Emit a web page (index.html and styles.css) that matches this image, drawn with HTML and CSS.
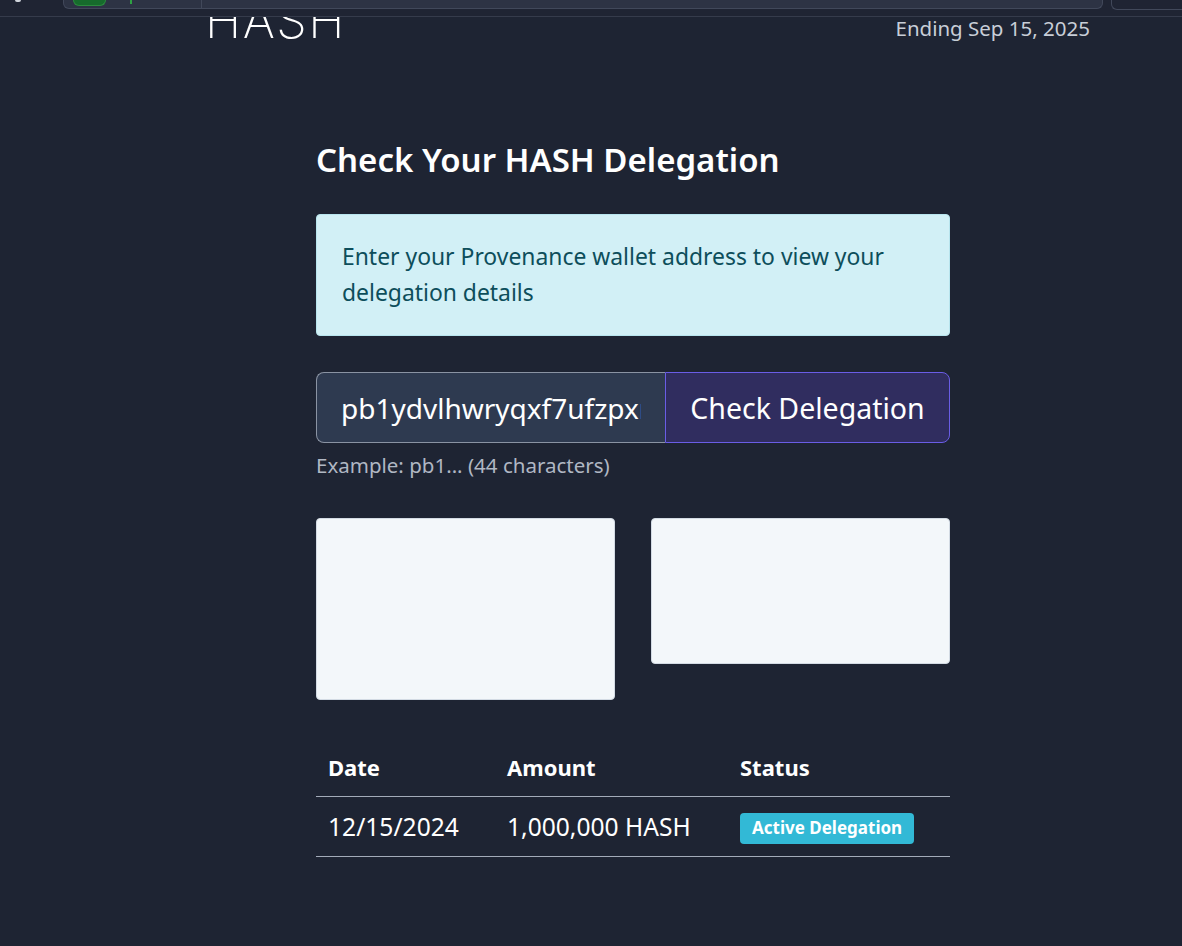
FILE: index.html
```html
<!DOCTYPE html>
<html lang="en">
<head>
<meta charset="utf-8">
<title>Check Your HASH Delegation</title>
<link rel="stylesheet" href="styles.css">
</head>
<body>
<div class="chrome">
  <div class="chrome-left"><span class="chrome-dot"></span></div>
  <div class="url-field">
    <span class="url-pill"></span>
    <span class="url-caret"></span>
    <span class="url-sep"></span>
  </div>
  <div class="chrome-right"></div>
</div>
<header class="site-header">
  <div class="logo">HASH</div>
  <div class="ending">Ending Sep 15, 2025</div>
</header>
<main class="main">
  <h1 class="title">Check Your HASH Delegation</h1>
  <div class="alert">Enter your Provenance wallet address to view your delegation details</div>
  <form class="lookup" onsubmit="return false">
    <div class="input-group">
      <input class="address" type="text" value="pb1ydvlhwryqxf7ufzpxnt8ylk4ylc3mpcm9xs3q" spellcheck="false">
      <button class="check-btn" type="submit">Check Delegation</button>
    </div>
    <div class="hint">Example: pb1... (44 characters)</div>
  </form>
  <div class="cards">
    <div class="card card-tall"></div>
    <div class="card card-short"></div>
  </div>
  <table class="history">
    <thead>
      <tr><th>Date</th><th>Amount</th><th>Status</th></tr>
    </thead>
    <tbody>
      <tr><td>12/15/2024</td><td>1,000,000 HASH</td><td><span class="badge">Active Delegation</span></td></tr>
    </tbody>
  </table>
</main>
</body>
</html>
```
FILE: styles.css
```css
* { box-sizing: border-box; }
html, body { margin: 0; padding: 0; }
body {
  background: #1e2433;
  color: #ffffff;
  font-family: "Noto Sans", "Liberation Sans", sans-serif;
  min-height: 946px;
}
.chrome {
  height: 17px;
  display: flex;
  align-items: flex-start;
  background: #1f2433;
  border-bottom: 1px solid #353b4b;
  position: relative;
  z-index: 2;
}
.chrome-left {
  width: 63px;
  display: flex;
  padding-left: 15px;
}
.chrome-dot {
  width: 6px; height: 2px;
  background: #d0d4dc;
  border-radius: 0 0 3px 3px;
}
.url-field {
  width: 1040px;
  height: 9px;
  background: #2d3344;
  border: 1px solid #41485a;
  border-top: none;
  border-radius: 0 0 6px 6px;
  display: flex;
  align-items: flex-start;
  padding-left: 9px;
}
.url-pill {
  width: 33px; height: 6px;
  background: #166b2c;
  border: 1px solid #2b8a3e;
  border-top: none;
  border-radius: 0 0 6px 6px;
}
.url-caret {
  width: 2px; height: 4px;
  background: #2ea043;
  margin-left: 24px;
}
.url-sep {
  width: 1px; height: 8px;
  background: #41485a;
  margin-left: 69px;
}
.chrome-right {
  margin-left: 8px;
  flex: 1;
  height: 10px;
  border: 1px solid #41485a;
  border-top: none;
  border-right: none;
  border-radius: 0 0 0 6px;
}
.site-header {
  height: 42px;
  overflow: hidden;
  display: flex;
  justify-content: space-between;
  align-items: flex-end;
  padding: 0 92px 0 205px;
  margin-top: -18px;
}
.logo {
  font-family: "Inter", sans-serif;
  font-weight: 200;
  font-size: 49px;
  line-height: 49px;
  letter-spacing: 1.5px;
  color: #ffffff;
  margin-bottom: -4px;
}
.ending {
  font-size: 20.5px;
  line-height: 26px;
  color: #c8ced8;
  margin-bottom: 0px;
}
.main {
  width: 634px;
  margin-left: 316px;
  padding-top: 99px;
}
.title {
  margin: 0;
  font-size: 33px;
  line-height: 40px;
  font-weight: 600;
  color: #ffffff;
}
.alert {
  margin-top: 34px;
  background: #d2f0f6;
  border: 1px solid #b8e5ee;
  border-radius: 4px;
  color: #0d4e5b;
  font-size: 22.9px;
  line-height: 36px;
  padding: 24px 25px 24px 25px;
}
.lookup { margin-top: 36px; }
.input-group {
  display: flex;
  height: 71px;
}
.address {
  width: 349px;
  height: 71px;
  background: #2e3a50;
  border: 1px solid #8a93a3;
  border-right: none;
  border-radius: 8px 0 0 8px;
  color: #ffffff;
  font-family: inherit;
  font-size: 28px;
  padding: 0 24px;
  outline: none;
  margin: 0;
}
.check-btn {
  flex: 1;
  height: 71px;
  background: #302d5f;
  border: 1px solid #6a5de6;
  border-radius: 0 8px 8px 0;
  color: #ffffff;
  font-family: inherit;
  font-size: 28.5px;
  padding: 0 20px;
  margin: 0;
}
.hint {
  margin-top: 8px;
  font-size: 20.5px;
  line-height: 28px;
  color: #b0b7c3;
}
.cards {
  margin-top: 39px;
  display: flex;
  align-items: flex-start;
  gap: 36px;
}
.card {
  flex: 1;
  background: #f3f7fa;
  border: 1px solid #d3dbe4;
  border-radius: 4px;
}
.card-tall { height: 182px; }
.card-short { height: 146px; }
.history {
  margin-top: 37px;
  width: 100%;
  border-collapse: collapse;
}
.history th {
  text-align: left;
  font-weight: 700;
  font-size: 22px;
  padding: 16px 12px 15px;
  line-height: 28px;
  border-bottom: 1px solid #a3abb9;
}
.history td {
  text-align: left;
  font-size: 24.6px;
  padding: 13px 12px 12px;
  line-height: 31px;
  border-bottom: 1px solid #a3abb9;
  vertical-align: middle;
}
.history th:nth-child(1) { width: 179px; }
.history th:nth-child(2) { width: 233px; }
.badge {
  display: inline-block;
  vertical-align: middle;
  background: #32b9d6;
  color: #ffffff;
  font-weight: 700;
  font-size: 17px;
  line-height: 22px;
  padding: 4px 12px 5px;
  border-radius: 4px;
}
```
